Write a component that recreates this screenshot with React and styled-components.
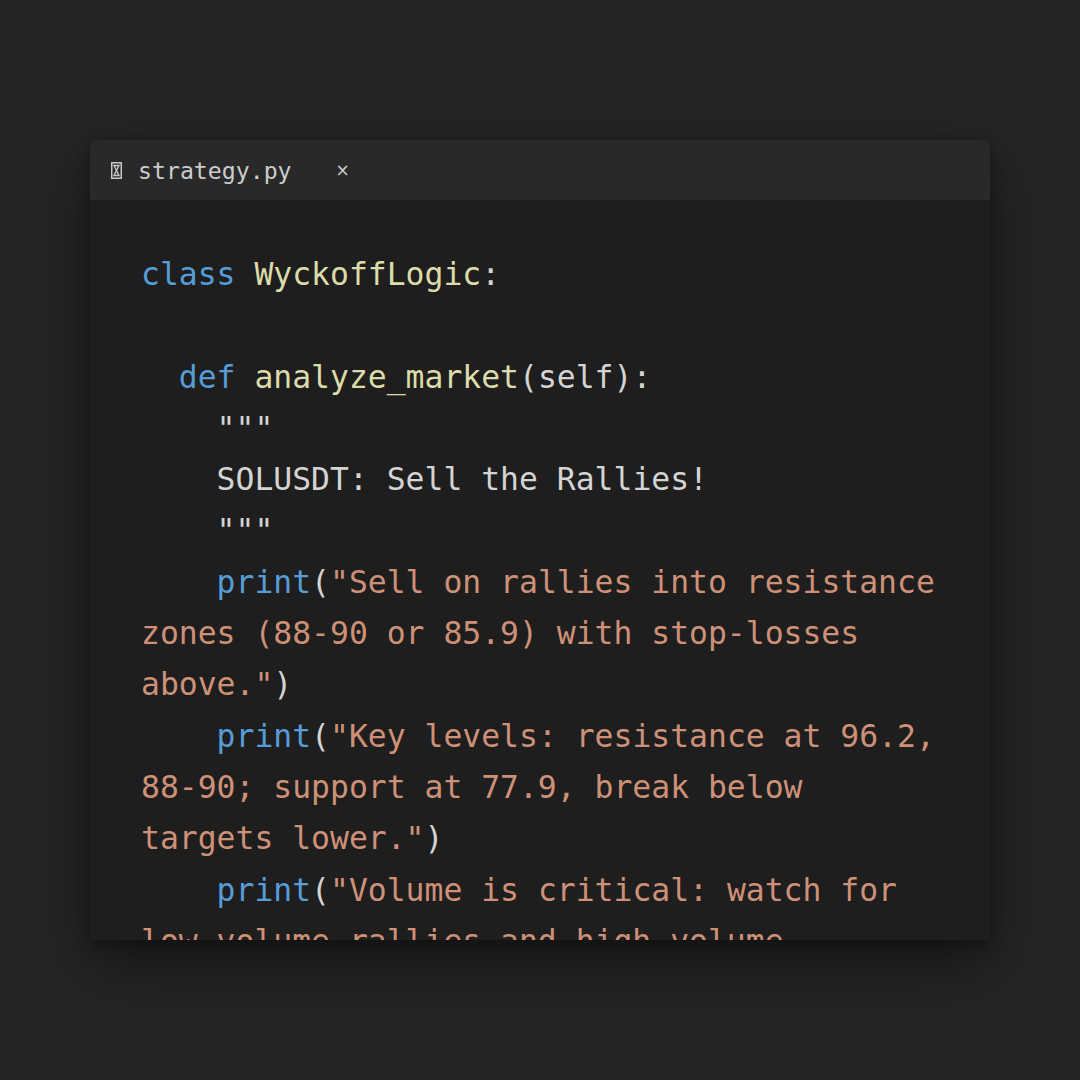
import React from "react";
import styled, { createGlobalStyle } from "styled-components";

const COLORS = {
  page: "#252525",
  bar: "#292929",
  editor: "#1e1e1e",
  text: "#d4d4d4",
  keyword: "#569cd6",
  name: "#dcdcaa",
  string: "#ce9178",
  tab: "#cccccc",
};

const GlobalStyle = createGlobalStyle`
  html, body {
    margin: 0;
    padding: 0;
    background: ${COLORS.page};
  }
`;

const Page = styled.div`
  width: 1080px;
  height: 1080px;
  box-sizing: border-box;
  padding-top: 140px;
  display: flex;
  justify-content: center;
  align-items: flex-start;
  background: ${COLORS.page};
`;

const Window = styled.div`
  width: 900px;
  display: flex;
  flex-direction: column;
  border-radius: 8px 8px 0 0;
  box-shadow: 0 24px 60px rgba(0, 0, 0, 0.45), 0 4px 14px rgba(0, 0, 0, 0.25);
`;

const TabBar = styled.div`
  height: 60px;
  display: flex;
  align-items: center;
  padding-left: 21px;
  background: ${COLORS.bar};
  border-radius: 8px 8px 0 0;
`;

const Tab = styled.div`
  display: flex;
  align-items: center;
  gap: 16px;
  font-family: "DejaVu Sans Mono", "Liberation Mono", monospace;
  font-size: 23.2px;
  color: ${COLORS.tab};
`;

const Close = styled.span`
  margin-left: 28px;
  font-family: "DejaVu Sans", sans-serif;
  font-size: 17px;
  color: ${COLORS.tab};
`;

const Editor = styled.div`
  height: 740px;
  overflow: hidden;
  background: ${COLORS.editor};
  padding: 49px 0 0 51px;
  box-sizing: border-box;
`;

const Code = styled.pre`
  margin: 0;
  width: 42.5ch;
  font-family: "DejaVu Sans Mono", "Liberation Mono", monospace;
  font-size: 31.4px;
  line-height: 51.3px;
  color: ${COLORS.text};
  white-space: pre-wrap;
  word-break: normal;
`;

const Tok = styled.span`
  color: ${(p) => COLORS[p.$k] || COLORS.text};
`;

function FileIcon() {
  return (
    <svg width="11" height="17" viewBox="0 0 11 17">
      <rect x="0.75" y="0.75" width="9.5" height="15.5" fill="none" stroke="#c8c8c8" strokeWidth="1.5" />
      <path d="M3 3.5 L8 3.5 L3 13.5 L8 13.5 Z" fill="none" stroke="#c8c8c8" strokeWidth="1.4" />
    </svg>
  );
}

export default function App() {
  return (
    <>
      <GlobalStyle />
      <Page>
        <Window>
          <TabBar>
            <Tab>
              <FileIcon />
              <span>strategy.py</span>
              <Close>×</Close>
            </Tab>
          </TabBar>
          <Editor>
            <Code>
              <Tok $k="keyword">class</Tok> <Tok $k="name">WyckoffLogic</Tok>:{"\n"}
              {"\n"}
              {"  "}<Tok $k="keyword">def</Tok> <Tok $k="name">analyze_market</Tok>(self):{"\n"}
              {'    """\n'}
              {"    SOLUSDT: Sell the Rallies!\n"}
              {'    """\n'}
              {"    "}<Tok $k="keyword">print</Tok>(<Tok $k="string">"Sell on rallies into resistance zones (88-90 or 85.9) with stop-losses above."</Tok>){"\n"}
              {"    "}<Tok $k="keyword">print</Tok>(<Tok $k="string">"Key levels: resistance at 96.2, 88-90; support at 77.9, break below targets lower."</Tok>){"\n"}
              {"    "}<Tok $k="keyword">print</Tok>(<Tok $k="string">"Volume is critical: watch for low volume rallies and high volume selloffs."</Tok>){"\n"}
            </Code>
          </Editor>
        </Window>
      </Page>
    </>
  );
}
